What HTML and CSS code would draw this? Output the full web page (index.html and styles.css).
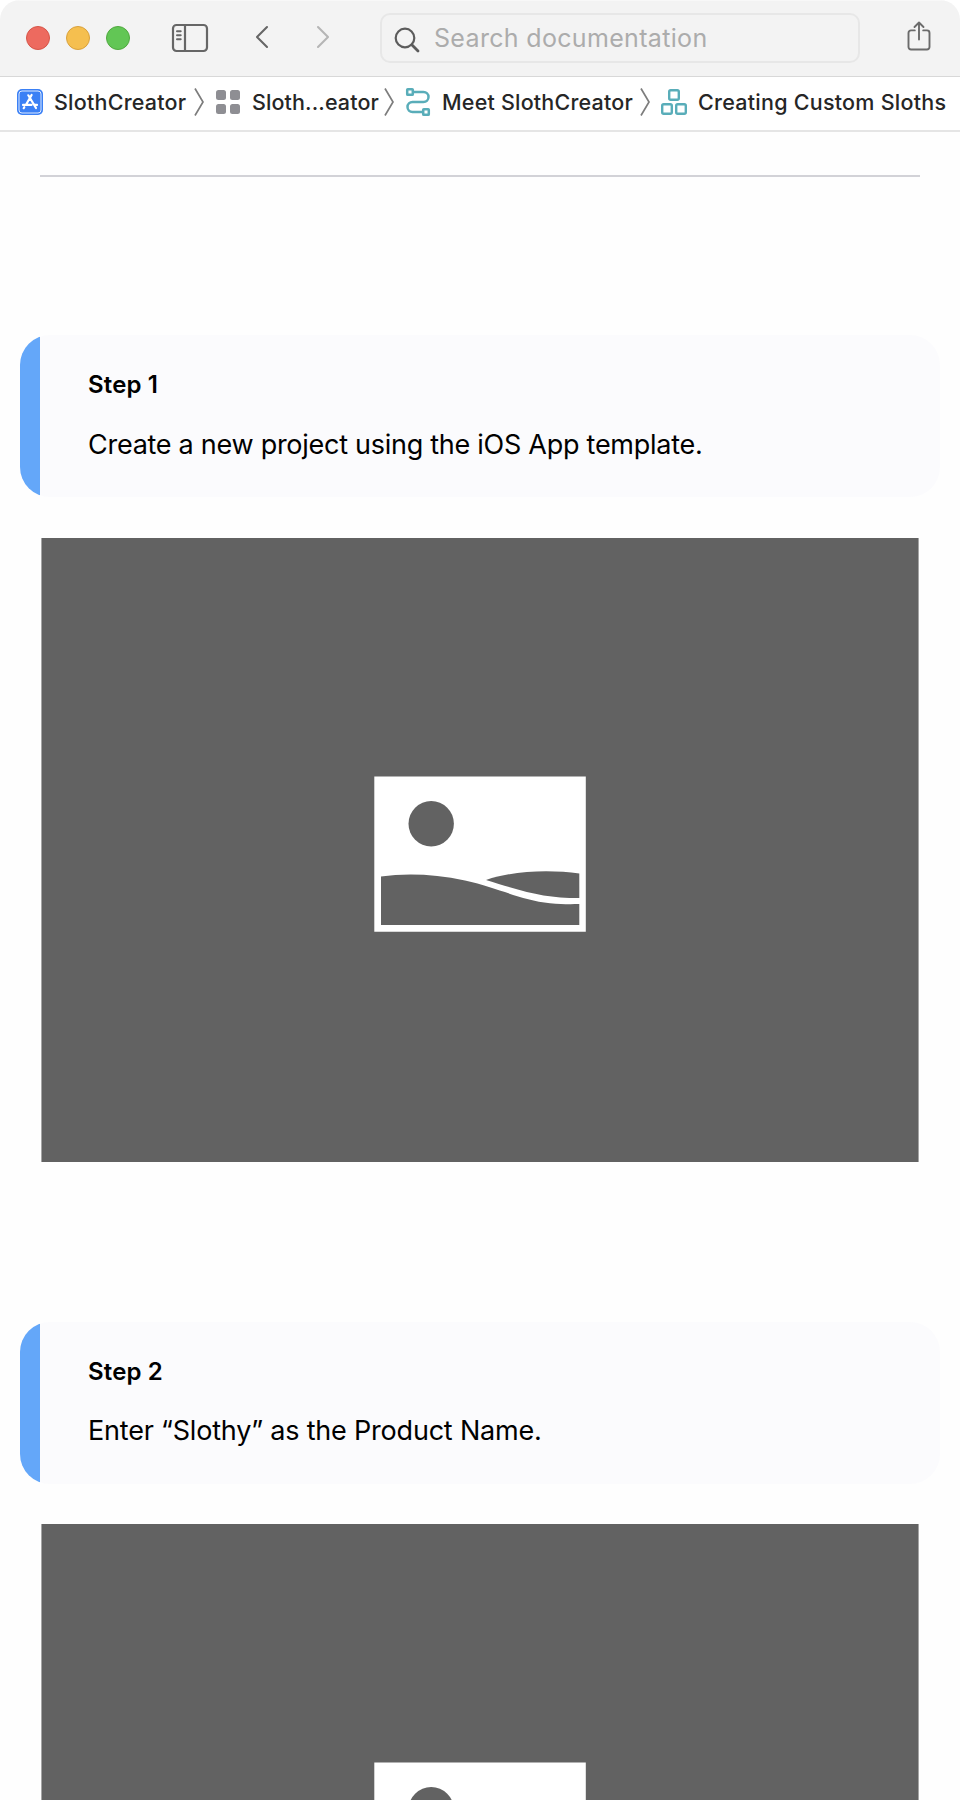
FILE: index.html
```
<!DOCTYPE html>
<html lang="en">
<head>
<meta charset="utf-8">
<title>Creating Custom Sloths</title>
<link rel="stylesheet" href="styles.css">
</head>
<body>
<svg class="symbols" width="0" height="0" aria-hidden="true">
  <symbol id="picture" viewBox="0 0 212 156">
    <path fill="#fff" d="M.3.4h211.500v155.300H.3z"/>
    <circle cx="57.2" cy="47.8" r="22.7" fill="#626262"/>
    <path fill="#626262" d="M7 100.500C32 97 61 98 91 104.500C125 112 146 124 176 127.200C187 128.300 195 128.300 205.300 128.100V149H7Z"/>
    <path fill="#626262" d="M112 104C140 94.500 176 93.500 205.300 97.500V122C171 122 154 117 112 104Z"/>
  </symbol>
  <symbol id="separator" viewBox="0 0 12 30">
    <path d="M2 1.500 10 15 2 28.500" fill="none" stroke="#7d7d7d" stroke-width="1.700"/>
  </symbol>
</svg>
<div class="window">
  <header class="toolbar">
    <div class="lights"><i class="light close"></i><i class="light minimize"></i><i class="light expand"></i></div>
    <svg class="sidebar-icon" width="38" height="30" viewBox="0 0 38 30" fill="none" stroke="#666" stroke-width="2.200"><rect x="2" y="2" width="34" height="26" rx="3.500"/><path d="M14 2v26"/><path d="M6 8.300h3.700M6 12.300h3.700M6 16.300h3.700" stroke-width="2" stroke-linecap="round"/></svg>
    <svg class="back-icon" width="14" height="24" viewBox="0 0 14 24" fill="none" stroke="#666" stroke-width="2.100"><path d="M12 2 2 12l10 10" stroke-linecap="round" stroke-linejoin="round"/></svg>
    <svg class="forward-icon" width="14" height="24" viewBox="0 0 14 24" fill="none" stroke="#b5b5b5" stroke-width="2.100"><path d="m2 2 10 10L2 22" stroke-linecap="round" stroke-linejoin="round"/></svg>
    <div class="search">
      <svg width="26" height="26" viewBox="0 0 26 26" fill="none" stroke="#5c5c5c"><circle cx="11" cy="11" r="9.300" stroke-width="2.200"/><path d="m17.800 17.800 6.200 6.200" stroke-width="2.800" stroke-linecap="round"/></svg>
      <span class="placeholder">Search documentation</span>
    </div>
    <svg class="share-icon" width="24" height="30" viewBox="0 0 24 30" fill="none" stroke="#6b6b6b" stroke-width="1.900" stroke-linecap="round" stroke-linejoin="round"><path d="M7.800 9.400H4A2.500 2.500 0 0 0 1.500 11.900V26A2.500 2.500 0 0 0 4 28.500h16a2.500 2.500 0 0 0 2.500-2.500V11.900A2.500 2.500 0 0 0 20 9.400h-3.800M12 18.500V1.500M7.500 6 12 1.500 16.500 6"/></svg>
  </header>
  <nav class="crumbs">
    <svg class="app-icon" width="26" height="26" viewBox="0 0 26 26"><rect width="26" height="26" rx="5" fill="#3b80f5"/><rect x="2" y="2" width="22" height="22" rx="3" fill="none" stroke="#dce9ff" stroke-width="1"/><g fill="none" stroke="#fff" stroke-width="2.200" stroke-linecap="round"><path d="M11.300 6.300 19 19M14.600 6 9 15.700M6 15.900h8.500M17.800 15.900H20M7.300 18.200l-.6 1"/></g></svg>
    <span class="crumb c1">SlothCreator</span>
    <svg class="sep s1" width="12" height="30"><use href="#separator"/></svg>
    <svg class="grid-icon" width="24" height="24" viewBox="0 0 24 24" fill="#8e8e93"><rect width="10" height="10" rx="2.500"/><rect x="14" width="10" height="10" rx="2.500"/><rect y="14" width="10" height="10" rx="2.500"/><rect x="14" y="14" width="10" height="10" rx="2.500"/></svg>
    <span class="crumb c2">Sloth...eator</span>
    <svg class="sep s2" width="12" height="30"><use href="#separator"/></svg>
    <svg class="path-icon" width="26" height="30" viewBox="0 0 26 30" fill="none" stroke="#59adb9" stroke-width="2.500"><rect x="2.200" y="2.200" width="5.600" height="5.600" rx=".6"/><rect x="18.200" y="22.200" width="5.600" height="5.600" rx=".6"/><path d="M8 5h10.500a5 5 0 0 1 0 10H7.500a5 5 0 0 0 0 10H18"/></svg>
    <span class="crumb c3">Meet SlothCreator</span>
    <svg class="sep s3" width="12" height="30"><use href="#separator"/></svg>
    <svg class="blocks-icon" width="26" height="26" viewBox="0 0 26 26" fill="none" stroke="#59adb9" stroke-width="2.400"><rect x="8.200" y="1.200" width="9.600" height="9.600" rx="1.500"/><rect x="1.200" y="15.200" width="9.600" height="9.600" rx="1.500"/><rect x="15.200" y="15.200" width="9.600" height="9.600" rx="1.500"/></svg>
    <span class="crumb c4">Creating Custom Sloths</span>
  </nav>
  <main class="content">
    <hr class="rule">
    <section class="step">
      <div class="card"><h2 class="label l1">Step 1</h2><p class="text t1">Create a new project using the iOS App template.</p></div>
      <div class="media"><svg width="212" height="156"><use href="#picture"/></svg></div>
    </section>
    <section class="step">
      <div class="card"><h2 class="label l2">Step 2</h2><p class="text t2">Enter “Slothy” as the Product Name.</p></div>
      <div class="media"><svg width="212" height="156"><use href="#picture"/></svg></div>
    </section>
  </main>
</div>
</body>
</html>
```
FILE: styles.css
```
* { box-sizing: border-box; }
html { background: #fff; }
body { margin: 0; height: 1800px; overflow: hidden; font-family: Inter, "Liberation Sans", sans-serif; color: #000; }
svg { display: block; flex: none; }
.symbols { position: absolute; }
.window { width: 960px; height: 1800px; overflow: hidden; border-radius: 20px 20px 0 0; background: #fefefe; }
.toolbar { display: flex; align-items: flex-start; height: 77px; padding-left: 26px; background: #f3f3f3; border-top: 1px solid #f8f8f8; border-bottom: 1px solid #d8d8d8; }
.lights { display: flex; gap: 16px; margin-top: 25px; }
.light { width: 24px; height: 24px; border-radius: 50%; border: 1px solid; }
.close { background: #ed6a5f; border-color: #d65548; }
.minimize { background: #f5bf4f; border-color: #d9a13c; }
.expand { background: #62c655; border-color: #50a93f; }
.sidebar-icon { margin: 22px 0 0 41px; }
.back-icon { margin: 24px 0 0 46px; }
.forward-icon { margin: 24px 0 0 47px; }
.search { display: flex; align-items: center; width: 480px; height: 50px; margin: 12px 0 0 50px; padding-left: 12px; border: 2px solid #e7e7e7; border-radius: 10px; background: #f3f3f3; }
.search svg { margin-top: 4px; }
.placeholder { margin-left: 14px; font-size: 25px; letter-spacing: .33px; line-height: 30px; color: #acacac; white-space: nowrap; }
.share-icon { margin: 20px 0 0 47px; }
.crumbs { display: flex; align-items: center; height: 55px; padding: 0 0 4px 17px; border-bottom: 2px solid #e5e5e5; background: #fff; }
.crumb { flex: none; margin-left: 11px; font-size: 21.5px; font-weight: 450; line-height: 26px; letter-spacing: .22px; white-space: nowrap; color: #262626; }
.c1 { width: 134px; }
.c2 { width: 127px; margin-left: 12px; letter-spacing: .1px; }
.c3 { width: 192px; margin-left: 11px; letter-spacing: .2px; }
.c4 { width: 250px; letter-spacing: .25px; }
.sep { margin-left: 5px; }
.s2 { margin-left: 4px; }
.grid-icon { margin-left: 11px; }
.path-icon { margin-left: 10px; }
.blocks-icon { margin-left: 10px; }
.content { padding: 43px 20px 0; }
.rule { height: 2px; margin: 0 20px 158px; border: 0; background: #d2d2d7; }
.card { height: 162px; padding: 35px 0 0 68px; border-radius: 30px; background: linear-gradient(90deg, #64a7f9 20px, #fbfbfd 20px); }
.label { margin: 0; font-size: 24px; font-weight: 600; line-height: 30px; letter-spacing: .15px; white-space: nowrap; }
.text { margin: 27px 0 0; font-size: 27px; line-height: 36px; letter-spacing: -.27px; white-space: nowrap; }
.t2 { margin-top: 26px; letter-spacing: -.2px; }
.media { display: flex; align-items: center; justify-content: center; height: 624px; margin: 41px 21px 160px; padding-top: 8px; border: solid #a5a5a5; border-width: 0 1px; background: #626262; }
.step + .step .media { margin-top: 40px; }
```
